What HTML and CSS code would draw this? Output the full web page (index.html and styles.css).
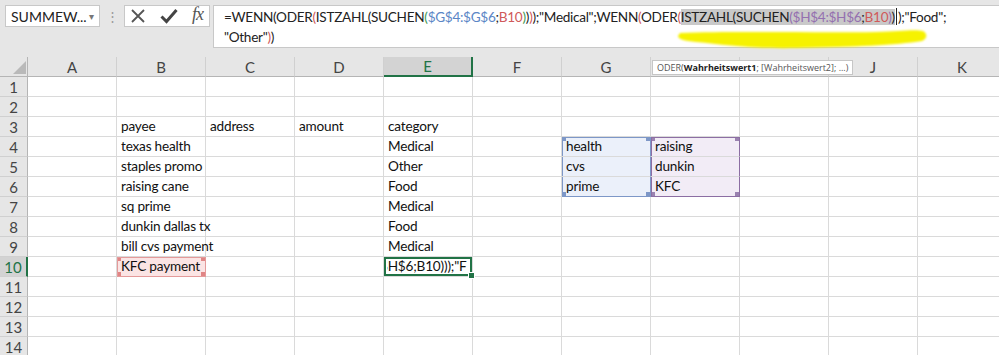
FILE: index.html
```html
<!DOCTYPE html>
<html lang="de">
<head>
  <meta charset="UTF-8">
  <meta name="viewport" content="width=device-width, initial-scale=1.0">
  <title>Mappe1 - Excel</title>
  <link rel="stylesheet" href="styles.css">
</head>
<body>
  <div class="app">

    <!-- Bearbeitungsleiste -->
    <div class="topbar">
      <div class="namebox"><span>SUMMEW...</span><span class="caret">&#9662;</span></div>
      <div class="dots">&#8942;</div>
      <div class="fxbtns">
        <svg width="16" height="16" viewBox="0 0 16 16"><path d="M2 2 L14 14 M14 2 L2 14" stroke="#555" stroke-width="1.8" fill="none"/></svg>
        <svg width="18" height="16" viewBox="0 0 18 16"><path d="M1.5 8.5 L6.5 13.5 L16.5 2" stroke="#444" stroke-width="3" fill="none"/></svg>
        <span class="fx">fx</span>
      </div>
      <div class="formula">
        <div>=WENN(ODER<i class="r">(</i>ISTZAHL(SUCHEN<i class="g">(</i><i class="b">$G$4:$G$6</i>;<i class="r">B10</i><i class="g">)</i>)<i class="r">)</i>);"Medical";WENN<i class="r">(</i>ODER<i class="r">(</i><span class="hl">ISTZAHL(SUCHEN<i class="p">($H$4:$H$6</i>;<i class="r">B10</i><i class="p">)</i>)</span><span class="cursor"></span>);"Food";</div>
        <div>"Other"<i class="r">)</i>)</div>
      </div>
    </div>

    <!-- Tabelle -->
    <table class="sheet">
      <colgroup>
        <col class="c-rh">
        <col class="c-col" span="11">
      </colgroup>
      <tr class="hdr">
        <th class="corner"><svg width="28" height="18" viewBox="0 0 28 18"><path d="M13 16 L26 16 L26 3 Z" fill="#b9b9b9"/></svg></th>
        <th>A</th><th>B</th><th>C</th><th>D</th><th class="sel">E</th><th>F</th><th>G</th><th>H</th><th>I</th><th>J</th><th>K</th>
      </tr>
      <tr><th>1</th><td></td><td></td><td></td><td></td><td></td><td></td><td></td><td></td><td></td><td></td><td></td></tr>
      <tr><th>2</th><td></td><td></td><td></td><td></td><td></td><td></td><td></td><td></td><td></td><td></td><td></td></tr>
      <tr><th>3</th><td></td><td>payee</td><td>address</td><td>amount</td><td>category</td><td></td><td></td><td></td><td></td><td></td><td></td></tr>
      <tr><th>4</th><td></td><td>texas health</td><td></td><td></td><td>Medical</td><td></td><td class="rg-g top">health</td><td class="rg-h top">raising</td><td></td><td></td><td></td></tr>
      <tr><th>5</th><td></td><td>staples promo</td><td></td><td></td><td>Other</td><td></td><td class="rg-g">cvs</td><td class="rg-h">dunkin</td><td></td><td></td><td></td></tr>
      <tr><th>6</th><td></td><td>raising cane</td><td></td><td></td><td>Food</td><td></td><td class="rg-g bottom">prime</td><td class="rg-h bottom">KFC</td><td></td><td></td><td></td></tr>
      <tr><th>7</th><td></td><td>sq prime</td><td></td><td></td><td>Medical</td><td></td><td></td><td></td><td></td><td></td><td></td></tr>
      <tr><th>8</th><td></td><td>dunkin dallas tx</td><td></td><td></td><td>Food</td><td></td><td></td><td></td><td></td><td></td><td></td></tr>
      <tr><th>9</th><td></td><td>bill cvs payment</td><td></td><td></td><td>Medical</td><td></td><td></td><td></td><td></td><td></td><td></td></tr>
      <tr><th class="sel">10</th><td></td><td class="ref">KFC payment</td><td></td><td></td><td class="active"><span class="edit">$H$6;B10)));"F</span></td><td></td><td></td><td></td><td></td><td></td><td></td></tr>
      <tr><th>11</th><td></td><td></td><td></td><td></td><td></td><td></td><td></td><td></td><td></td><td></td><td></td></tr>
      <tr><th>12</th><td></td><td></td><td></td><td></td><td></td><td></td><td></td><td></td><td></td><td></td><td></td></tr>
      <tr><th>13</th><td></td><td></td><td></td><td></td><td></td><td></td><td></td><td></td><td></td><td></td><td></td></tr>
      <tr><th>14</th><td></td><td></td><td></td><td></td><td></td><td></td><td></td><td></td><td></td><td></td><td></td></tr>
    </table>

    <!-- Funktions-Tooltip -->
    <div class="tip">ODER(<b>Wahrheitswert1</b>; [Wahrheitswert2]; ...)</div>

    <!-- Textmarker -->
    <svg class="marker" width="260" height="26" viewBox="0 0 260 26">
      <defs><filter id="soft"><feGaussianBlur stdDeviation="1.2"/></filter></defs>
      <path d="M4 6 C60 4 140 6 200 5 C225 4 240 2 247 4 C252 7 251 12 246 14 C220 18 180 20 120 21 C80 22 50 18 20 15 C8 14 2 12 2 9 Z" fill="#f6f200" filter="url(#soft)"/>
    </svg>

  </div>
</body>
</html>
```

FILE: styles.css
```css
body{
  margin: 0;
  background-color: #e6e6e6;
  overflow: hidden;
  font-family: Lato, "Open Sans", sans-serif;
}
.app{
  position: relative;
  width: 999px;
  height: 355px;
  overflow: hidden;
}

/* Bearbeitungsleiste */
.topbar{
  display: flex;
  align-items: flex-start;
  height: 57px;
  padding: 5px 0 0 5px;
  box-sizing: border-box;
}
.namebox{
  display: flex;
  flex-shrink: 0;
  align-items: center;
  justify-content: space-between;
  width: 95px;
  height: 22px;
  padding: 0 5px 0 5px;
  box-sizing: border-box;
  background-color: #fff;
  border: 1px solid #c8c8c8;
  font-family: Lato, "Open Sans", sans-serif;
  font-size: 14px;
  color: #222;
}
.namebox .caret{
  font-size: 10px;
  color: #777;
}
.dots{
  flex-shrink: 0;
  width: 24px;
  height: 22px;
  line-height: 22px;
  text-align: center;
  color: #999;
  font-size: 13px;
}
.fxbtns{
  display: flex;
  flex-shrink: 0;
  align-items: center;
  justify-content: space-between;
  width: 86px;
  height: 22px;
  padding: 0 6px 0 5px;
  box-sizing: border-box;
  background-color: #fff;
  border: 1px solid #c8c8c8;
}
.fxbtns .fx{
  font-family: "Liberation Serif", serif;
  font-style: italic;
  font-size: 18px;
  color: #555;
  letter-spacing: -1px;
  margin-top: -3px;
}
.formula{
  flex: 1;
  min-width: 0;
  height: 43px;
  margin-left: 3px;
  padding: 1px 10px;
  box-sizing: border-box;
  overflow: hidden;
  background-color: #fff;
  border: 1px solid #c8c8c8;
  border-right: none;
  font-family: Lato, "Open Sans", sans-serif;
  font-size: 13.6px;
  letter-spacing: -0.3px;
  line-height: 20px;
  color: #222;
  white-space: nowrap;
}
.formula i{
  font-style: normal;
}
.formula .r{ color: #d05a5a; }
.formula .g{ color: #3f9a55; }
.formula .b{ color: #5b86c6; }
.formula .p{ color: #9470b0; }
.formula .hl{
  background-color: #c9c9c9;
}
.formula .cursor{
  display: inline-block;
  width: 1px;
  height: 17px;
  margin: 0 1px -3px;
  background-color: #222;
}

/* Tabelle */
.sheet{
  border-collapse: separate;
  border-spacing: 0;
  table-layout: fixed;
  width: 1007px;
  background-color: #fff;
}
.c-rh{ width: 28px; }
.c-col{ width: 89px; }
.sheet tr{
  height: 20px;
}
.sheet tr.hdr{
  height: 19px;
}
.sheet th{
  padding: 0;
  background-color: #e6e6e6;
  font-weight: 400;
  font-size: 15px;
  color: #444;
  text-align: center;
  border-right: 1px solid #d0d0d0;
  border-bottom: 1px solid #d0d0d0;
}
.sheet tr.hdr th{
  border-bottom-color: #b5b5b5;
}
.sheet tr th:first-child{
  border-right-color: #b5b5b5;
}
.sheet th.corner{
  padding: 0;
  line-height: 0;
  vertical-align: bottom;
}
.sheet tr.hdr th.sel{
  background-color: #d3d3d3;
  color: #217346;
  border-bottom: 2px solid #217346;
}
.sheet th.sel{
  background-color: #d3d3d3;
  color: #217346;
  border-right: 2px solid #217346 !important;
}
.sheet td{
  padding: 0 4px;
  border-right: 1px solid #dadada;
  border-bottom: 1px solid #dadada;
  font-size: 13.6px;
  letter-spacing: -0.2px;
  line-height: 19px;
  color: #111;
  white-space: nowrap;
  overflow: visible;
}

/* Bezugsbereiche */
.sheet td.rg-g{
  background-color: #ebf0fa;
  border-right-color: #7d97c7;
  box-shadow: inset 1px 0 0 #7d97c7;
}
.sheet td.rg-h{
  background-color: #f2ecf6;
  border-right-color: #8c6ea3;
  box-shadow: inset 1px 0 0 #8c6ea3;
}
.sheet td.rg-g.top{
  box-shadow: inset 1px 0 0 #7d97c7, inset 0 1px 0 #7d97c7;
  background: linear-gradient(#7d97c7, #7d97c7) left top / 4px 4px no-repeat,
              linear-gradient(#7d97c7, #7d97c7) right top / 4px 4px no-repeat,
              #ebf0fa;
}
.sheet td.rg-g.bottom{
  border-bottom-color: #7d97c7;
  background: linear-gradient(#7d97c7, #7d97c7) left bottom / 4px 4px no-repeat,
              linear-gradient(#7d97c7, #7d97c7) right bottom / 4px 4px no-repeat,
              #ebf0fa;
}
.sheet td.rg-h.top{
  box-shadow: inset 1px 0 0 #8c6ea3, inset 0 1px 0 #8c6ea3;
  background: linear-gradient(#9a82b0, #9a82b0) left top / 4px 4px no-repeat,
              linear-gradient(#9a82b0, #9a82b0) right top / 4px 4px no-repeat,
              #f2ecf6;
}
.sheet td.rg-h.bottom{
  border-bottom-color: #8c6ea3;
  background: linear-gradient(#9a82b0, #9a82b0) left bottom / 4px 4px no-repeat,
              linear-gradient(#9a82b0, #9a82b0) right bottom / 4px 4px no-repeat,
              #f2ecf6;
}
.sheet td.ref{
  border-right-color: #e49a9a;
  border-bottom-color: #e49a9a;
  box-shadow: inset 1px 0 0 #e49a9a, inset 0 1px 0 #e49a9a;
  background: linear-gradient(#e08585, #e08585) left top / 4px 4px no-repeat,
              linear-gradient(#e08585, #e08585) right top / 4px 4px no-repeat,
              linear-gradient(#e08585, #e08585) left bottom / 4px 4px no-repeat,
              linear-gradient(#e08585, #e08585) right bottom / 4px 4px no-repeat,
              #fbe4e4;
}

/* aktive Zelle */
.sheet td.active{
  position: relative;
  padding: 0 2px 0 3px;
  box-shadow: inset 0 0 0 2px #217346;
}
.sheet td.active::after{
  content: '';
  position: absolute;
  right: -3px;
  bottom: -3px;
  width: 5px;
  height: 5px;
  background-color: #217346;
  border: 1px solid #fff;
}
.sheet td.active .edit{
  display: block;
  overflow: hidden;
  text-indent: -7px;
}

/* Tooltip */
.tip{
  position: absolute;
  left: 652px;
  top: 60px;
  height: 13px;
  padding: 0 4px;
  background-color: #fff;
  border: 1px solid #c6c6c6;
  font-family: "Open Sans", sans-serif;
  font-size: 9px;
  line-height: 13px;
  color: #555;
  white-space: nowrap;
}
.tip b{
  color: #222;
}

/* Textmarker */
.marker{
  position: absolute;
  left: 676px;
  top: 27px;
}
```
